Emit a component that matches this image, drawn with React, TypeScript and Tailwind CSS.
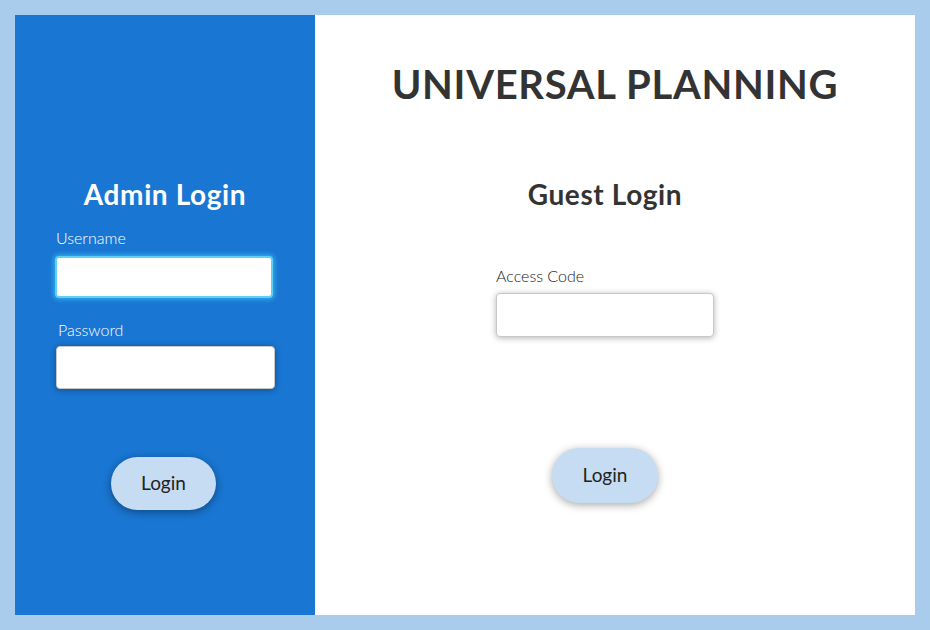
import React from 'react';

const App: React.FC = () => {
  return (
    <div className="w-[930px] h-[630px] bg-[#a9cbec] p-[15px] flex" style={{ fontFamily: 'Lato, "Open Sans", sans-serif' }}>
      {/* Admin side */}
      <div className="w-[300px] h-[600px] bg-[#1976d2] flex flex-col pt-[163px] pl-[40px]">
        <h2 className="w-[220px] text-center text-[28px] leading-[32px] font-bold tracking-[0.6px] text-white">Admin Login</h2>
        <label className="mt-[18px] ml-[1px] text-[16px] leading-[20px] font-light text-white">Username</label>
        <div className="mt-[8px] w-[218px] h-[42px] bg-white rounded-[4px] border-2 border-[#5fd0f0] shadow-[0_0_4px_2px_rgba(64,196,255,0.6)]"></div>
        <label className="mt-[22px] ml-[3px] text-[16px] leading-[20px] font-light text-white">Password</label>
        <div className="mt-[6px] ml-[1px] w-[219px] h-[43px] bg-white rounded-[4px] border border-[#c8c8c8] shadow-[0_1px_6px_rgba(0,0,0,0.35)]"></div>
        <div className="mt-[68px] ml-[56px] w-[105px] h-[53px] rounded-full bg-[#c6dcf2] flex items-center justify-center text-[19px] text-[#222] shadow-[0_2px_8px_rgba(0,0,0,0.4)]">
          Login
        </div>
      </div>

      {/* Guest side */}
      <div className="w-[600px] h-[600px] bg-white flex flex-col items-center pt-[45px]">
        <h1 className="text-[40px] leading-[48px] font-bold tracking-[0.7px] text-[#333]">UNIVERSAL PLANNING</h1>
        <div className="flex flex-col items-center pr-[20px]">
          <h2 className="mt-[70px] text-[28px] leading-[32px] font-bold tracking-[0.6px] text-[#333]">Guest Login</h2>
          <div className="mt-[56px] flex flex-col">
            <label className="text-[16px] leading-[20px] font-light text-[#222]">Access Code</label>
            <div className="mt-[7px] w-[218px] h-[44px] bg-white rounded-[4px] border border-[#c8c8c8] shadow-[0_1px_6px_rgba(0,0,0,0.3)]"></div>
          </div>
          <div className="mt-[111px] w-[106px] h-[55px] rounded-full bg-[#c6dcf2] flex items-center justify-center text-[19px] text-[#222] shadow-[0_2px_8px_rgba(0,0,0,0.35)]">
            Login
          </div>
        </div>
      </div>
    </div>
  );
};

export default App;
